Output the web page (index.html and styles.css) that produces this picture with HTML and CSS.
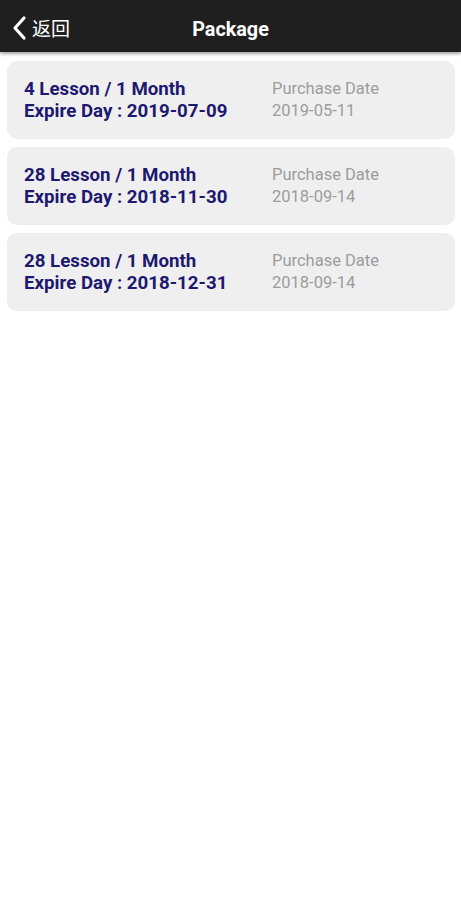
FILE: index.html
```html
<!DOCTYPE html>
<html>
<head>
<meta charset="utf-8">
<link rel="stylesheet" href="styles.css">
</head>
<body>
<header class="topbar">
  <div class="back">
    <svg class="chev" width="16" height="26" viewBox="0 0 16 26"><path d="M13 3 L4 13 L13 23" fill="none" stroke="#fff" stroke-width="3.2" stroke-linecap="round" stroke-linejoin="round"/></svg>
    <span class="back-text">返回</span>
  </div>
  <div class="title">Package</div>
</header>
<main class="list">
  <div class="card">
    <div class="left"><div>4 Lesson / 1 Month</div><div>Expire Day : 2019-07-09</div></div>
    <div class="right"><div>Purchase Date</div><div>2019-05-11</div></div>
  </div>
  <div class="card">
    <div class="left"><div>28 Lesson / 1 Month</div><div>Expire Day : 2018-11-30</div></div>
    <div class="right"><div>Purchase Date</div><div>2018-09-14</div></div>
  </div>
  <div class="card">
    <div class="left"><div>28 Lesson / 1 Month</div><div>Expire Day : 2018-12-31</div></div>
    <div class="right"><div>Purchase Date</div><div>2018-09-14</div></div>
  </div>
</main>
</body>
</html>
```
FILE: styles.css
```css
html, body { margin: 0; padding: 0; background: #fff; }
body { font-family: Roboto, "Noto Sans CJK SC", sans-serif; width: 461px; height: 900px; overflow: hidden; }
.topbar {
  position: relative;
  height: 52px;
  background: #1f1f1f;
  display: flex;
  align-items: center;
  justify-content: center;
  padding-top: 6px;
  box-sizing: border-box;
  box-shadow: 0 2px 3px rgba(0,0,0,0.35);
  z-index: 1;
}
.back {
  position: absolute;
  left: 11px;
  top: 15px;
  display: flex;
  align-items: center;
  gap: 5px;
  color: #fff;
}
.back-text { font-family: "Noto Sans CJK SC", sans-serif; font-size: 19px; line-height: 26px; }
.title { color: #fff; font-weight: 700; font-size: 19.8px; }
.list { padding: 9px 6px 0 7px; display: flex; flex-direction: column; gap: 8px; }
.card {
  background: #efefef;
  border-radius: 10px;
  height: 78px;
  display: flex;
  align-items: center;
  padding-left: 17px;
  box-sizing: border-box;
}
.left { width: 248px; color: #1d1970; font-weight: 700; font-size: 18.7px; line-height: 22px; }
.right { color: #9c9c9c; font-size: 16.5px; line-height: 22px; }
```
